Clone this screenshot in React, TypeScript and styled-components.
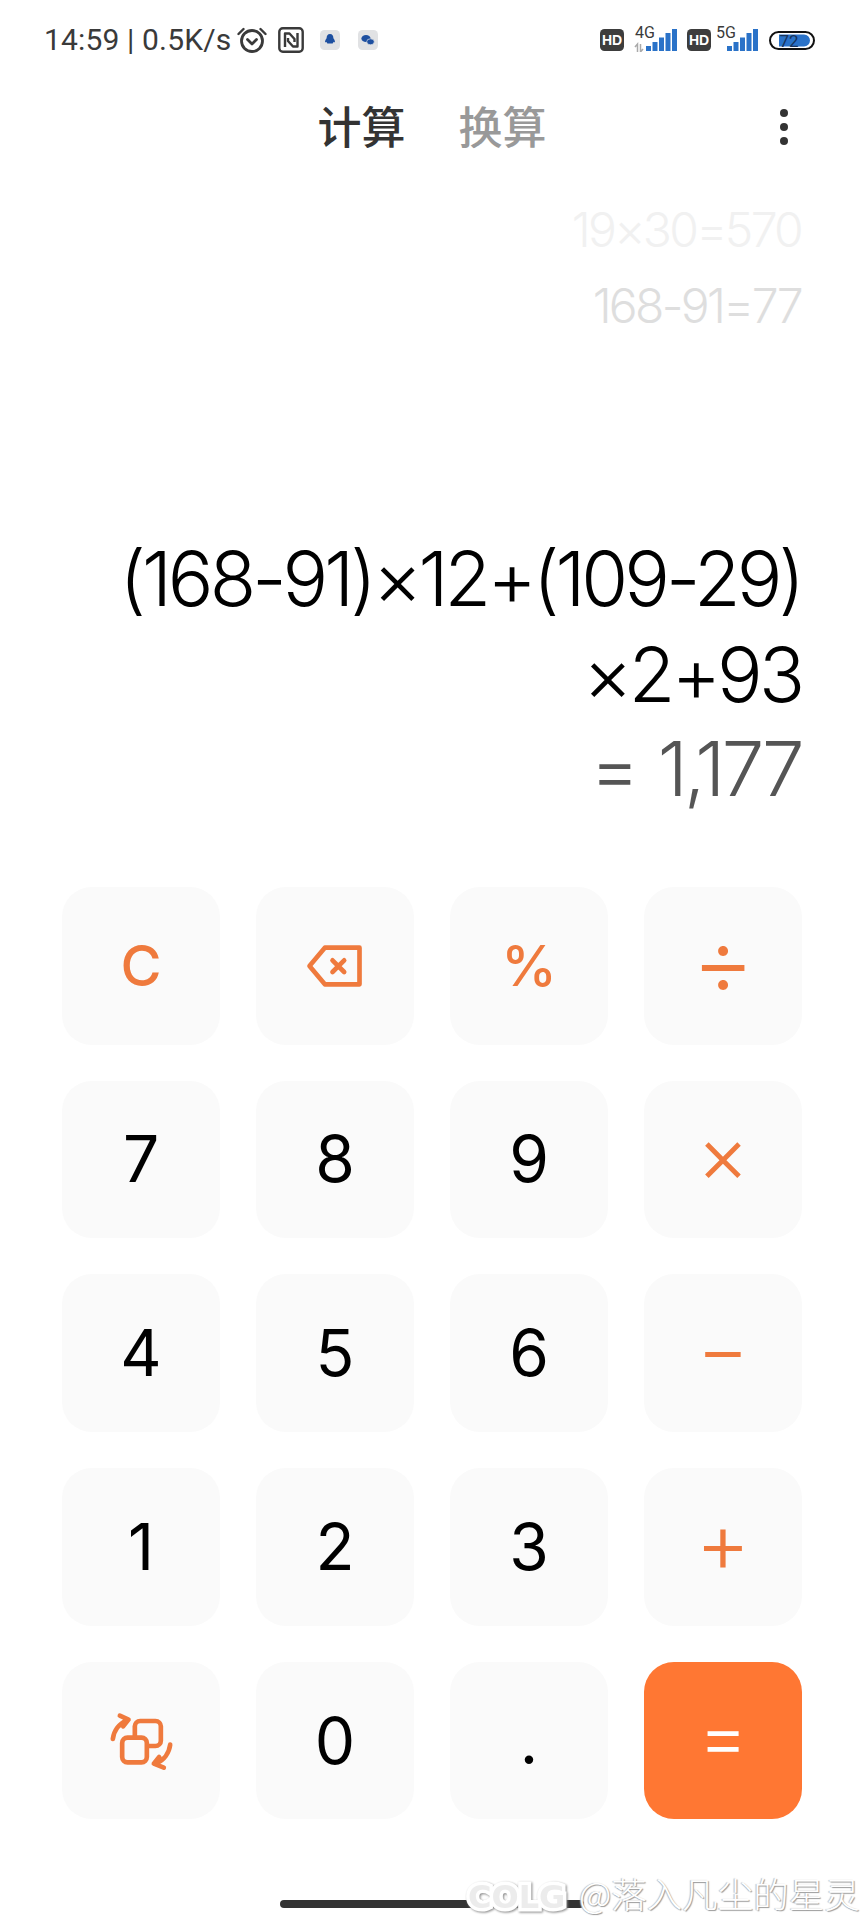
import React from "react";
import styled, { createGlobalStyle } from "styled-components";

const Global = createGlobalStyle`
  html, body { margin: 0; padding: 0; background: #fff; }
  * { box-sizing: border-box; }
`;

const NUM = `Inter, "Noto Sans", "Noto Sans CJK SC", sans-serif`;
const ORANGE = "#ef7a3d";

const Page = styled.div`
  position: relative;
  width: 864px;
  height: 1920px;
  overflow: hidden;
  background: #fff;
  display: flex;
  flex-direction: column;
  font-family: ${NUM};
`;

const StatusBar = styled.div`
  height: 80px;
  padding: 26px 49px 0 44px;
  display: flex;
  justify-content: space-between;
  align-items: flex-start;
`;
const StatusGroup = styled.div`
  display: flex;
  align-items: center;
  height: 28px;
`;
const StatusText = styled.span`
  font-family: Roboto, sans-serif;
  font-size: 30px;
  line-height: 28px;
  letter-spacing: 0.15px;
  color: #3a3a3a;
  white-space: nowrap;
`;
const StatusIcon = styled.svg<{ $ml: number }>`
  display: block;
  flex: none;
  margin-left: ${(p) => p.$ml}px;
`;
const SignalBox = styled.div<{ $ml: number }>`
  position: relative;
  flex: none;
  width: 44px;
  height: 24px;
  margin-left: ${(p) => p.$ml}px;
  svg {
    display: block;
  }
`;
const SignalLabel = styled.span`
  position: absolute;
  left: 1px;
  top: -2px;
  font-family: Roboto, sans-serif;
  font-size: 16px;
  line-height: 14px;
  color: #3a3a3a;
`;

const NavBar = styled.div`
  height: 94px;
  position: relative;
  display: flex;
  justify-content: center;
  gap: 53px;
  padding: 20px 0 0 0;
`;
const Tab = styled.span<{ $active?: boolean }>`
  font-family: "Noto Sans CJK SC", sans-serif;
  font-size: 44px;
  line-height: 50px;
  font-weight: 500;
  color: ${(p) => (p.$active ? "#333" : "#999")};
`;
const MoreDots = styled.div`
  position: absolute;
  left: 780px;
  top: 29px;
  display: flex;
  flex-direction: column;
  gap: 6px;
  span {
    width: 8px;
    height: 8px;
    border-radius: 50%;
    background: #333;
  }
`;

const Display = styled.div`
  height: 713px;
  padding: 18px 63px 0 0;
  display: flex;
  flex-direction: column;
  align-items: flex-end;
  font-weight: 300;
`;
const History = styled.div<{ $color: string }>`
  font-size: 48px;
  line-height: 76px;
  letter-spacing: -2.7px;
  color: ${(p) => p.$color};
  white-space: nowrap;
`;
const Expression = styled.div<{ $first?: boolean }>`
  margin-top: ${(p) => (p.$first ? 186 : 0)}px;
  font-size: 76px;
  line-height: 96px;
  letter-spacing: -3.95px;
  color: #000;
  white-space: nowrap;
`;
const Result = styled.div`
  margin-top: -2px;
  font-size: 76px;
  line-height: 96px;
  letter-spacing: -3.6px;
  word-spacing: 4px;
  color: #555;
  white-space: nowrap;
`;

const Keypad = styled.div`
  margin-left: 62px;
  width: 740px;
  display: grid;
  grid-template-columns: repeat(4, 158px);
  grid-auto-rows: 157.5px;
  column-gap: 36px;
  row-gap: 36.2px;
`;
const Key = styled.div<{ $kind: "digit" | "op" | "eq"; $size: number; $lift: number }>`
  border-radius: 30px;
  background: ${(p) => (p.$kind === "eq" ? "#ff7733" : "#fafafa")};
  color: ${(p) => (p.$kind === "eq" ? "#fff" : p.$kind === "op" ? ORANGE : "#000")};
  font-size: ${(p) => p.$size}px;
  line-height: 1;
  font-weight: ${(p) => (p.$kind === "digit" ? 380 : 350)};
  padding-bottom: ${(p) => p.$lift}px;
  display: flex;
  align-items: center;
  justify-content: center;
`;
const Strong = styled.span`
  font-weight: 500;
`;

const HomeBar = styled.div`
  position: absolute;
  left: 280px;
  top: 1900px;
  width: 304px;
  height: 8px;
  border-radius: 4px;
  background: #333;
`;
const Watermark = styled.div`
  position: absolute;
  left: 468px;
  top: 1873px;
  height: 40px;
  display: flex;
  align-items: center;
  white-space: nowrap;
`;
const WatermarkLogo = styled.span`
  font-family: "DejaVu Sans", sans-serif;
  font-weight: 700;
  font-size: 32px;
  line-height: 40px;
  width: 111px;
  margin-top: 8px;
  color: #ececec;
  -webkit-text-stroke: 7px #fff;
  paint-order: stroke fill;
  filter: drop-shadow(1px 1px 1px #888);
`;
const WatermarkText = styled.span`
  font-family: "Noto Sans CJK SC", sans-serif;
  font-size: 35.5px;
  line-height: 40px;
  font-weight: 300;
  color: #fff;
  text-shadow: 1px 1px 1px #999, -1px 0 1px #bbb;
`;

const Alarm = () => (
  <StatusIcon $ml={6} width={30} height={28} viewBox="0 0 30 28" fill="none" stroke="#3a3a3a">
    <circle cx="15" cy="15" r="10.5" strokeWidth="2.8" />
    <path d="M10.5 13.5 15 18l4.500-4.500" strokeWidth="2.8" strokeLinecap="round" strokeLinejoin="round" />
    <path d="M1.500 8 6.500 3M28.500 8l-5-5" strokeWidth="2.4" strokeLinecap="round" />
  </StatusIcon>
);
const Nfc = () => (
  <StatusIcon $ml={11} width={26} height={26} viewBox="0 0 26 26" fill="none" stroke="#3a3a3a" strokeWidth="2.4">
    <rect x="1.300" y="1.300" width="23.400" height="23.400" rx="3.500" />
    <path d="M7 20V6.500h4.500l5 5.500v3" strokeLinejoin="round" />
    <path d="M19.500 6v13.500H15l-5-5.500v-3" strokeLinejoin="round" />
  </StatusIcon>
);
const QQ = () => (
  <StatusIcon $ml={15} width={22} height={22} viewBox="0 0 22 22">
    <rect x="1" y="1" width="20" height="20" rx="4.500" fill="#e1e2e4" />
    <path d="M11 5c2.400 0 3.400 2 3.400 4.200 1.400 1.800 1.800 3.300 1.400 4-.3.3-.8 0-1.200-.5-.2.8-.6 1.400-1 1.800H8.400c-.4-.4-.8-1-1-1.800-.4.5-.9.8-1.200.5-.4-.7 0-2.200 1.400-4C7.600 7 8.600 5 11 5z" fill="#1d4fa0" />
  </StatusIcon>
);
const WeChat = () => (
  <StatusIcon $ml={16} width={22} height={22} viewBox="0 0 22 22">
    <rect x="1" y="1" width="20" height="20" rx="4.500" fill="#e1e2e4" />
    <ellipse cx="9" cy="9.500" rx="4.600" ry="3.600" fill="#1d4fa0" />
    <ellipse cx="13.500" cy="12.800" rx="3.800" ry="3" fill="#1d4fa0" stroke="#e1e2e4" strokeWidth=".7" />
  </StatusIcon>
);
const HD = ({ ml }: { ml: number }) => (
  <StatusIcon $ml={ml} width={24} height={22} viewBox="0 0 24 22">
    <rect width="24" height="22" rx="4.500" fill="#3d3d3d" />
    <text x="12" y="16" textAnchor="middle" fontFamily="Liberation Sans, sans-serif" fontWeight="700" fontSize="14" fill="#fff">HD</text>
  </StatusIcon>
);
const Signal = ({ label, ml, arrows }: { label: string; ml: number; arrows?: boolean }) => (
  <SignalBox $ml={ml}>
    <svg width="44" height="24" viewBox="0 0 44 24">
      {arrows && <path d="M1 19l2.500-3v8M6.500 16v8l2.500-3" fill="none" stroke="#aaa" strokeWidth="1.500" />}
      <g fill="#2a72c8">
        <rect x="12" y="18" width="5" height="5" />
        <rect x="18.500" y="14" width="5" height="9" />
        <rect x="25" y="9.500" width="5" height="13.500" />
        <rect x="31.500" y="5" width="5" height="18" />
        <rect x="38" y="1" width="5" height="22" />
      </g>
    </svg>
    <SignalLabel>{label}</SignalLabel>
  </SignalBox>
);
const Battery = () => (
  <StatusIcon $ml={10} width={46} height={19} viewBox="0 0 46 19">
    <rect x="1" y="1" width="44" height="17" rx="8.500" fill="#fff" stroke="#111" strokeWidth="2" />
    <path d="M10 3.500h25a6 6 0 0 1 0 12H10z" fill="#2a72c8" />
    <text x="20" y="15.500" textAnchor="middle" fontFamily="Roboto, sans-serif" fontSize="17" fill="#18335a">72</text>
  </StatusIcon>
);

const BackspaceIcon = () => (
  <svg width="62" height="46" viewBox="790 220 185 138" fill="none" stroke={ORANGE} strokeWidth="14" strokeLinecap="round" strokeLinejoin="round">
    <path d="M852 234h104v110H852l-46-55z" />
    <path d="M875 272l35 35M910 272l-35 35" />
  </svg>
);
const SwitchIcon = () => (
  <svg width="67" height="60" viewBox="205 210 200 180" fill="none" stroke={ORANGE} strokeWidth="14" strokeLinecap="round" strokeLinejoin="round">
    <rect x="285" y="240" width="78" height="75" rx="16" />
    <rect x="247" y="290" width="74" height="74" rx="16" fill="#fafafa" />
    <path d="M219 294c3-24 18-46 42-56M240 224l26 12-16 20" />
    <path d="M391 311c-3 24-18 46-42 56M372 380l-30-12 16-20" />
  </svg>
);

type K = { label: React.ReactNode; kind: "digit" | "op" | "eq"; size?: number; lift?: number };
const keys: K[] = [
  { label: <Strong>C</Strong>, kind: "op", size: 56 },
  { label: <BackspaceIcon />, kind: "op" },
  { label: <Strong>%</Strong>, kind: "op", size: 56 },
  { label: "÷", kind: "op", size: 96, lift: 12 },
  { label: "7", kind: "digit" },
  { label: "8", kind: "digit" },
  { label: "9", kind: "digit" },
  { label: "×", kind: "op", size: 80, lift: 10 },
  { label: "4", kind: "digit" },
  { label: "5", kind: "digit" },
  { label: "6", kind: "digit" },
  { label: "−", kind: "op", size: 80, lift: 10 },
  { label: "1", kind: "digit" },
  { label: "2", kind: "digit" },
  { label: "3", kind: "digit" },
  { label: "+", kind: "op", size: 84, lift: 10 },
  { label: <SwitchIcon />, kind: "op" },
  { label: "0", kind: "digit" },
  { label: ".", kind: "digit" },
  { label: "=", kind: "eq", size: 76, lift: 12 },
];

export default function App() {
  return (
    <Page>
      <Global />
      <StatusBar>
        <StatusGroup>
          <StatusText>14:59 | 0.5K/s</StatusText>
          <Alarm />
          <Nfc />
          <QQ />
          <WeChat />
        </StatusGroup>
        <StatusGroup>
          <HD ml={0} />
          <Signal label="4G" ml={10} arrows />
          <HD ml={9} />
          <Signal label="5G" ml={4} />
          <Battery />
        </StatusGroup>
      </StatusBar>
      <NavBar>
        <Tab $active>计算</Tab>
        <Tab>换算</Tab>
        <MoreDots>
          <span />
          <span />
          <span />
        </MoreDots>
      </NavBar>
      <Display>
        <History $color="#f1f1f1">19×30=570</History>
        <History $color="#dedede">168-91=77</History>
        <Expression $first>(168-91)×12+(109-29)</Expression>
        <Expression>×2+93</Expression>
        <Result>= 1,177</Result>
      </Display>
      <Keypad>
        {keys.map((k, i) => (
          <Key key={i} $kind={k.kind} $size={k.size ?? 64} $lift={k.lift ?? 0}>
            {k.label}
          </Key>
        ))}
      </Keypad>
      <HomeBar />
      <Watermark>
        <WatermarkLogo>COLG</WatermarkLogo>
        <WatermarkText>@落入凡尘的星灵</WatermarkText>
      </Watermark>
    </Page>
  );
}
